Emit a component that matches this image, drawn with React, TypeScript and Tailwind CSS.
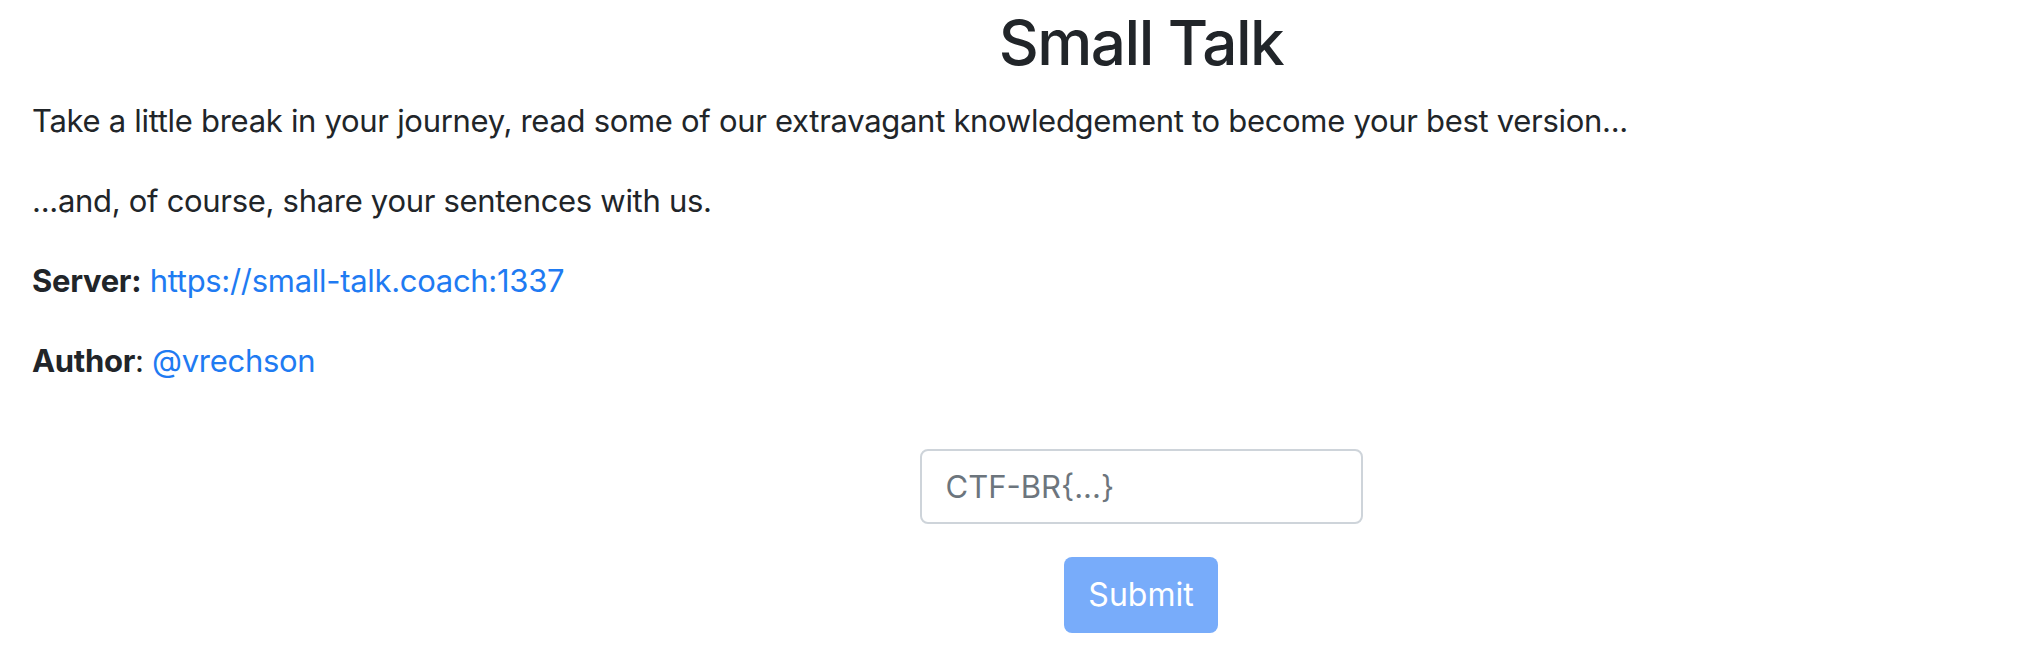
import React from "react";

export default function App() {
  return (
    <div className="min-h-[670px] w-full bg-white text-[#212529] font-['Inter','Liberation_Sans',sans-serif] pt-[4px]">
      <div className="pl-[244px] text-center">
        <h1 className="text-[62px] leading-[77px] font-medium mb-4 tracking-[-1.5px]">Small Talk</h1>
      </div>
      <div className="px-8 text-[31px] leading-[48px] tracking-[-0.3px]">
        <p className="mb-8">
          Take a little break in your journey, read some of our extravagant knowledgement to become your best version...
        </p>
        <p className="mb-8">...and, of course, share your sentences with us.</p>
        <p className="mb-8">
          <b className="font-bold">Server:</b>{" "}
          <a href="#" className="text-[#1f7bf2]">https://small-talk.coach:1337</a>
        </p>
        <p className="mb-8">
          <b className="font-bold">Author</b>:{" "}
          <a href="#" className="text-[#1f7bf2]">@vrechson</a>
        </p>
      </div>
      <form className="flex flex-col items-center pl-[244px] mt-[64px]" onSubmit={(e) => e.preventDefault()}>
        <input
          type="text"
          placeholder="CTF-BR{...}"
          className="w-[443px] h-[75px] border-2 border-[#ced4da] rounded-lg px-6 text-[31px] text-[#495057] placeholder:text-[#6c757d] outline-none bg-white"
        />
        <button
          type="submit"
          disabled
          className="mt-[33px] w-[154px] h-[76px] rounded-lg bg-[#78acfa] text-white text-[32px]"
        >
          Submit
        </button>
      </form>
    </div>
  );
}
